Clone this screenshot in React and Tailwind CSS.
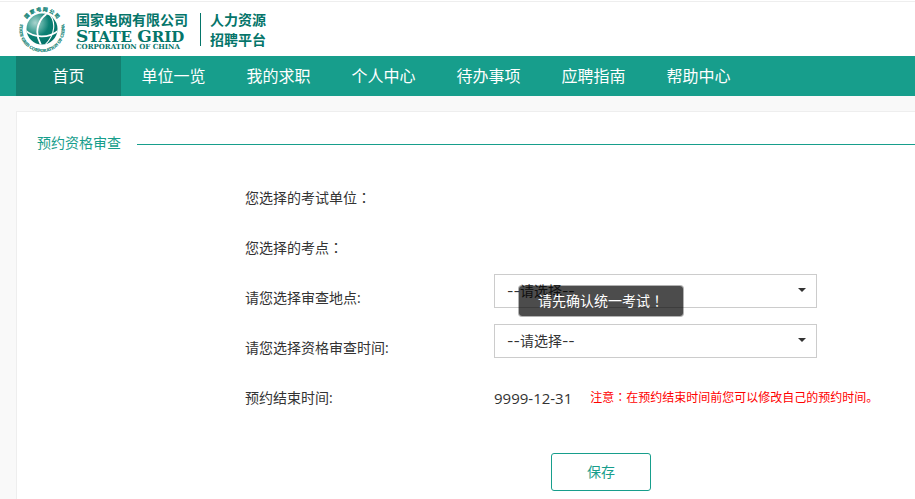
const navItems = ["首页", "单位一览", "我的求职", "个人中心", "待办事项", "应聘指南", "帮助中心"];

// Full-width punctuation, centred in its cell
function Punct({ children }) {
  return <span className="font-['Noto_Sans_CJK_JP',sans-serif] leading-none">{children}</span>;
}

function GlobeLogo() {
  return (
    <svg viewBox="0 0 48 48" className="h-12 w-12 shrink-0 overflow-visible" role="img" aria-label="国家电网">
      <defs>
        <radialGradient id="globe" cx="0.28" cy="0.3" r="0.75">
          <stop offset="0" stopColor="#a9d4ce" />
          <stop offset="0.35" stopColor="#4ea79c" />
          <stop offset="0.6" stopColor="#0b7f73" />
          <stop offset="1" stopColor="#05756a" />
        </radialGradient>
        <clipPath id="globe-clip">
          <circle cx="24" cy="23" r="15.5" />
        </clipPath>
        <path id="ring-top" d="M6.3 17.6 A18.8 18.8 0 0 1 41.7 17.6" />
        <path id="ring-bottom" d="M3.6 14 A22.5 22.5 0 1 0 44.4 14" />
      </defs>
      <circle cx="24" cy="23" r="15.5" fill="url(#globe)" />
      <g clipPath="url(#globe-clip)" fill="none" stroke="#fff">
        <path d="M32 6 C21 11 15 25 23 39" strokeWidth="1.8" />
        <path d="M30 7 C39 15 37 29 27 39" strokeWidth="1.1" />
        <path d="M7 24 C15 32 31 33 41 24" strokeWidth="1.8" />
      </g>
      <g fill="#0b7f73" stroke="#0b7f73" strokeWidth="0.2" fontWeight="700">
        <text fontSize="5" fontFamily="'Noto Sans CJK SC', sans-serif">
          <textPath href="#ring-top" startOffset="50%" textAnchor="middle">国 家 电 网 公 司</textPath>
        </text>
        <text fontSize="4.3" fontFamily="'Liberation Serif', serif">
          <textPath href="#ring-bottom" startOffset="50%" textAnchor="middle">STATE GRID CORPORATION OF CHINA</textPath>
        </text>
      </g>
    </svg>
  );
}

function Header() {
  return (
    <header className="flex h-14 items-start bg-white pt-px">
      <div className="flex w-full items-start border-t border-[#eeeeee] pt-1 pl-[18px] text-[#05756a]">
        <GlobeLogo />
        <div className="ml-[10px] w-28 pt-1 whitespace-nowrap">
          <div className="text-sm leading-5 font-bold">国家电网有限公司</div>
          <div className="font-['DejaVu_Serif',serif] text-[15px] leading-3 font-bold">
            <span className="text-[17px] leading-3">S</span>TATE <span className="text-[17px] leading-3">G</span>RID
          </div>
          <div className="font-['DejaVu_Serif',serif] text-[7px] leading-2 font-bold">CORPORATION OF CHINA</div>
        </div>
        <div className="mt-[7px] ml-3 h-[33px] w-px bg-[#05756a]" />
        <div className="ml-[9px] pt-1 text-sm leading-5 font-bold">
          <div>人力资源</div>
          <div>招聘平台</div>
        </div>
      </div>
    </header>
  );
}

function Navbar() {
  return (
    <nav className="flex h-10 bg-[#179e8c] pl-4">
      {navItems.map((item, i) => (
        <a
          key={item}
          href="#"
          className={
            i === 0
              ? "w-[105px] bg-[#147f70] text-center text-base leading-10 text-white"
              : "w-[105px] text-center text-base leading-10 text-white hover:bg-[#147f70]"
          }
        >
          {item}
        </a>
      ))}
    </nav>
  );
}

function SelectBox({ id, children }) {
  return (
    <div className="relative w-[323px]">
      <select
        id={id}
        className="block h-[34px] w-full appearance-none border border-[#cccccc] bg-white px-3 font-['Inter','Noto_Sans_CJK_SC',sans-serif] text-sm text-[#333333]"
      >
        <option>--请选择--</option>
      </select>
      <svg viewBox="0 0 8 4" className="pointer-events-none absolute top-[14px] right-[11px] h-1 w-2">
        <path d="M0 0h8L4 4z" fill="#333" />
      </svg>
      {children}
    </div>
  );
}

function Toast({ children }) {
  return (
    <div
      role="alert"
      className="absolute top-[11px] left-6 z-10 rounded border border-black/30 bg-black/70 bg-clip-padding px-[19px] text-sm leading-[30px] whitespace-nowrap text-white"
    >
      {children}
    </div>
  );
}

function ReviewForm() {
  return (
    <form className="pl-[208px] text-sm text-[#333333]">
      <div className="grid auto-rows-[50px] grid-cols-[249px_1fr] leading-5">
        <div className="pt-[14px]">您选择的考试单位<Punct>：</Punct></div>
        <div />
        <div className="pt-[14px]">您选择的考点<Punct>：</Punct></div>
        <div />
        <label htmlFor="place" className="pt-[14px]">请您选择审查地点:</label>
        <SelectBox id="place">
          <Toast>请先确认统一考试<Punct>！</Punct></Toast>
        </SelectBox>
        <label htmlFor="time" className="pt-[14px]">请您选择资格审查时间:</label>
        <SelectBox id="time" />
        <div className="pt-[14px]">预约结束时间:</div>
        <div className="flex gap-[18px] pt-[14px] whitespace-nowrap">
          <span className="text-[15px]">9999-12-31</span>
          <span className="text-xs leading-5 text-[#ff0000]">
            注意<Punct>：</Punct>在预约结束时间前您可以修改自己的预约时间。
          </span>
        </div>
      </div>
      <button
        type="button"
        className="mt-[29px] ml-[306px] block h-[38px] w-[100px] rounded-[3px] border border-[#179e8c] text-sm text-[#179e8c]"
      >
        保存
      </button>
    </form>
  );
}

function App() {
  return (
    <div className="min-h-screen overflow-hidden bg-[#f9f9f9] font-['Open_Sans','Noto_Sans_CJK_SC',sans-serif]">
      <Header />
      <Navbar />
      <main className="mt-[15px] ml-4 min-h-[388px] border-t border-l border-[#eeeeee] bg-white pt-[21px] pl-5">
        <div className="mb-[18px] flex items-center gap-4">
          <h1 className="pb-[3px] text-sm leading-5 text-[#179e8c]">预约资格审查</h1>
          <div className="h-px flex-1 bg-[#179e8c]" />
        </div>
        <ReviewForm />
      </main>
    </div>
  );
}

export default App;
